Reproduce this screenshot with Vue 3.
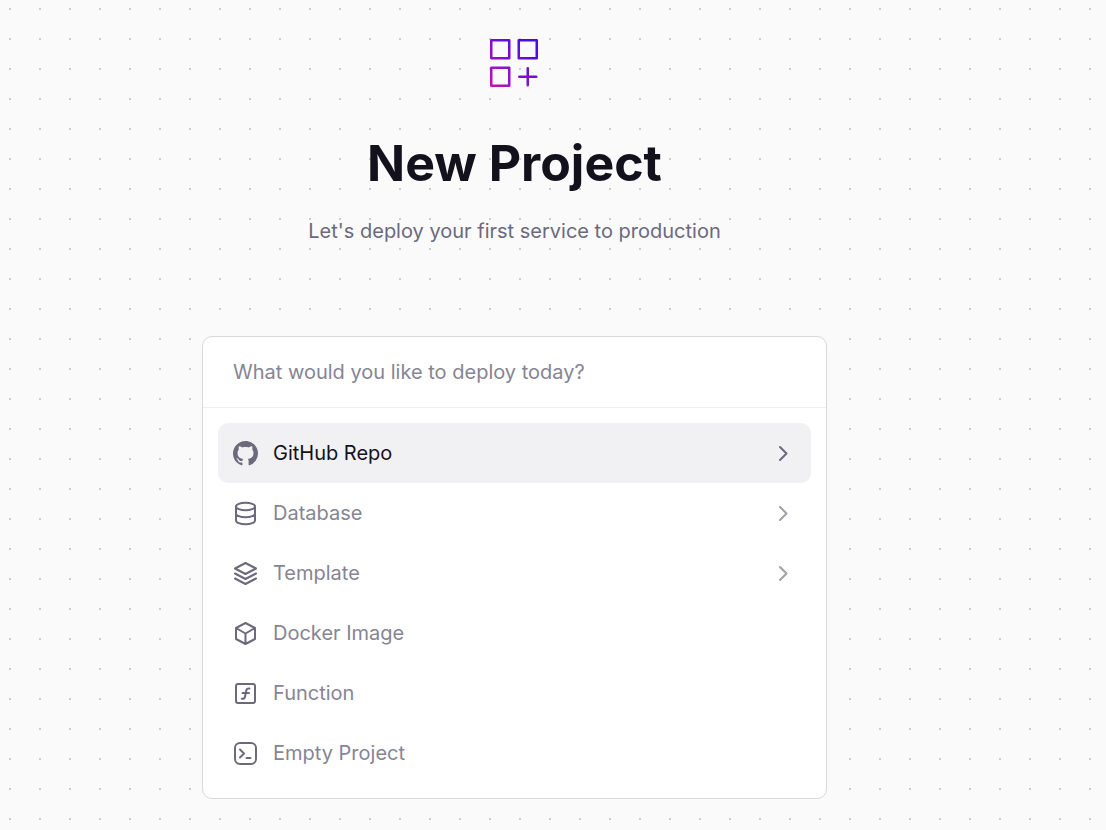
<script setup>
import { ref } from 'vue'

const query = ref('')
const active = ref('github')
const options = [
  { id: 'github', label: 'GitHub Repo', nested: true },
  { id: 'database', label: 'Database', nested: true },
  { id: 'template', label: 'Template', nested: true },
  { id: 'docker', label: 'Docker Image', nested: false },
  { id: 'function', label: 'Function', nested: false },
  { id: 'empty', label: 'Empty Project', nested: false }
]
</script>

<template>
  <main class="page">
    <header class="intro">
      <svg class="logo" viewBox="0 0 50 50" fill="none" stroke="url(#brand)" stroke-width="2.5" stroke-linecap="round" stroke-linejoin="round" aria-hidden="true">
        <defs>
          <linearGradient id="brand" gradientUnits="userSpaceOnUse" x1="0" y1="46" x2="38" y2="8">
            <stop offset="0" stop-color="#c013b4" />
            <stop offset="1" stop-color="#4b0be8" />
          </linearGradient>
        </defs>
        <path d="M2.25 2.25h18v18h-18zM29.75 2.25h18v18h-18zM2.25 29.75h18v18h-18zM38.75 30.250v17M30.250 38.750h17" />
      </svg>
      <h1 class="title">New Project</h1>
      <p class="subtitle">Let's deploy your first service to production</p>
    </header>

    <section class="palette">
      <input v-model="query" class="search" type="text" aria-label="What would you like to deploy today?" placeholder="What would you like to deploy today?" />
      <ul class="options">
        <li v-for="option in options" :key="option.id">
          <button type="button" class="option" :class="{ active: option.id === active }" @mouseenter="active = option.id">
            <svg v-if="option.id === 'github'" class="icon" viewBox="0 0 16 16" fill="currentColor" aria-hidden="true">
              <path d="M8 0C3.580 0 0 3.580 0 8c0 3.540 2.290 6.530 5.470 7.590.4.070.55-.17.55-.38 0-.19-.01-.82-.01-1.490-2.010.37-2.530-.49-2.690-.94-.09-.23-.48-.94-.82-1.130-.28-.15-.68-.52-.01-.53.63-.01 1.080.58 1.230.82.72 1.210 1.870.87 2.330.66.070-.52.28-.87.51-1.070-1.780-.2-3.640-.89-3.640-3.950 0-.87.31-1.590.82-2.150-.08-.2-.36-1.020.08-2.120 0 0 .67-.21 2.200.82.64-.18 1.320-.27 2-.27s1.360.09 2 .27c1.530-1.040 2.200-.82 2.200-.82.44 1.100.16 1.920.08 2.120.51.56.82 1.270.82 2.150 0 3.070-1.870 3.750-3.650 3.950.29.25.54.73.54 1.480 0 1.070-.01 1.930-.01 2.200 0 .21.15.46.55.38A8.010 8.010 0 0 0 16 8c0-4.420-3.580-8-8-8z" />
            </svg>
            <svg v-else class="icon" viewBox="0 0 25 25" fill="none" stroke="currentColor" stroke-width="2" stroke-linecap="round" stroke-linejoin="round" aria-hidden="true">
              <template v-if="option.id === 'database'">
                <ellipse cx="12.500" cy="5.500" rx="9.500" ry="3.800" />
                <path d="M3 5.500v14c0 2.100 4.200 3.800 9.500 3.800s9.500-1.700 9.500-3.800v-14M3 12.500c0 2.100 4.200 3.800 9.500 3.800s9.500-1.700 9.500-3.800" />
              </template>
              <path v-else-if="option.id === 'template'" d="M12.500 2 23 7.500 12.500 13 2 7.500zM2 12.500 12.500 18 23 12.500M2 17.500 12.500 23 23 17.500" />
              <path v-else-if="option.id === 'docker'" d="M12.500 2 22 7v11l-9.500 5L3 18V7zM3 7l9.500 5.500L22 7M12.500 12.500V23" />
              <template v-else-if="option.id === 'function'">
                <rect x="3" y="3" width="19" height="19" rx="2" />
                <path d="M16.500 7.500h-.8c-1.500 0-2.200.7-2.500 2.200l-1.200 6c-.3 1.500-1 2.100-2.400 2.100h-.8M9.500 12h6.500" />
              </template>
              <template v-else>
                <rect x="2" y="2" width="21" height="21" rx="5" />
                <path d="m7 8.500 4 4-4 4M13.500 17h4" />
              </template>
            </svg>
            <span class="label">{{ option.label }}</span>
            <svg v-if="option.nested" class="chevron" viewBox="0 0 20 20" fill="none" stroke="currentColor" stroke-width="2" stroke-linecap="round" stroke-linejoin="round" aria-hidden="true">
              <path d="m7 4 6.500 6.500L7 17" />
            </svg>
          </button>
        </li>
      </ul>
    </section>
  </main>
</template>

<style>
body {
  margin: 0;
  background: #fafafa;
}
</style>

<style scoped>
.page {
  box-sizing: border-box;
  min-height: 100vh;
  padding: 38px 77px 31px 0;
  display: flex;
  flex-direction: column;
  align-items: center;
  font-family: Inter, "Liberation Sans", sans-serif;
  font-size: 20px;
  line-height: 30px;
  color: #13111c;
  background-color: #fafafa;
  background-image: radial-gradient(circle at 10px 9px, #cdcdcf 1px, transparent 1px);
  background-size: 30px 30px;
}
.intro {
  display: flex;
  flex-direction: column;
  align-items: center;
  text-align: center;
}
.logo {
  width: 50px;
  height: 50px;
}
.title {
  margin: 45px 0 0;
  font-size: 50px;
  line-height: 60px;
  font-weight: 700;
}
.subtitle {
  margin: 23px 0 0;
  color: #6c697d;
}
.palette {
  box-sizing: border-box;
  width: 100%;
  max-width: 625px;
  margin-top: 90px;
  border: 1px solid #d9d9dc;
  border-radius: 10px;
  background: #fff;
  overflow: hidden;
}
.search {
  display: block;
  box-sizing: border-box;
  width: 100%;
  height: 71px;
  padding: 0 30px;
  border: 0;
  border-bottom: 1px solid #eeeef0;
  outline: 0;
  background: transparent;
  font: inherit;
  color: #13111c;
}
.search::placeholder {
  color: #868593;
  opacity: 1;
}
.options {
  margin: 0;
  padding: 15px;
  list-style: none;
}
.option {
  display: flex;
  align-items: center;
  gap: 15px;
  width: 100%;
  height: 60px;
  padding: 0 18px 0 15px;
  border: 0;
  border-radius: 10px;
  background: transparent;
  font: inherit;
  color: #868593;
  text-align: left;
  cursor: pointer;
}
.option.active {
  background: #f1f1f3;
  color: #13111c;
}
.icon {
  width: 25px;
  height: 25px;
  color: #6c697d;
}
.label {
  flex: 1;
}
.chevron {
  width: 20px;
  height: 20px;
  color: #a1a0aa;
}
.active .chevron {
  color: #6c697d;
}
</style>
